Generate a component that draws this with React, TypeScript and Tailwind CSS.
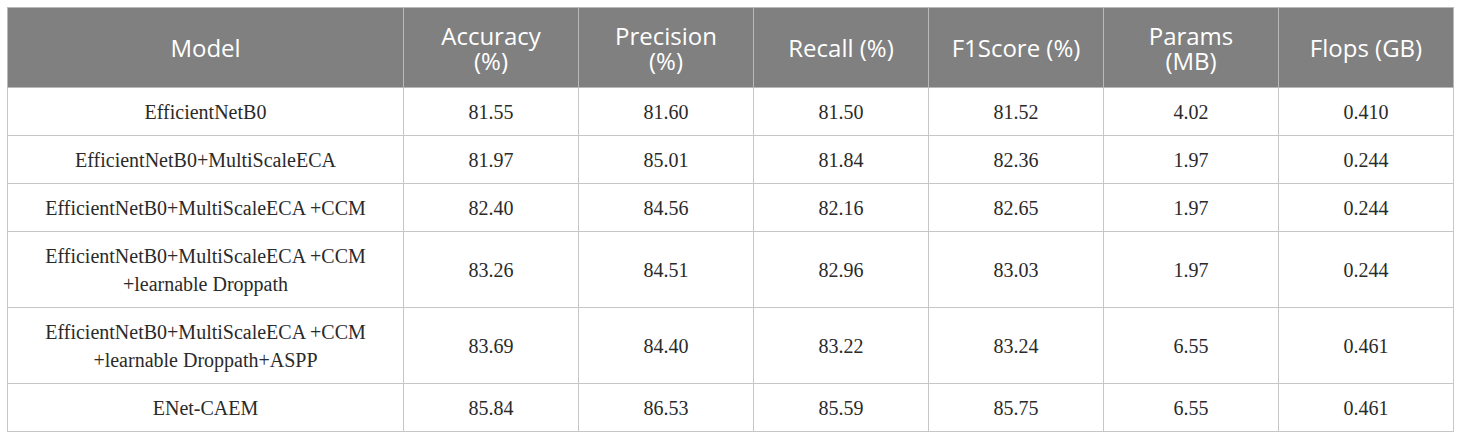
import React from 'react';

const headers = ['Model', 'Accuracy\n(%)', 'Precision\n(%)', 'Recall (%)', 'F1Score (%)', 'Params\n(MB)', 'Flops (GB)'];

const rows: string[][] = [
    ['EfficientNetB0', '81.55', '81.60', '81.50', '81.52', '4.02', '0.410'],
    ['EfficientNetB0+MultiScaleECA', '81.97', '85.01', '81.84', '82.36', '1.97', '0.244'],
    ['EfficientNetB0+MultiScaleECA +CCM', '82.40', '84.56', '82.16', '82.65', '1.97', '0.244'],
    ['EfficientNetB0+MultiScaleECA +CCM\n+learnable Droppath', '83.26', '84.51', '82.96', '83.03', '1.97', '0.244'],
    ['EfficientNetB0+MultiScaleECA +CCM\n+learnable Droppath+ASPP', '83.69', '84.40', '83.22', '83.24', '6.55', '0.461'],
    ['ENet-CAEM', '85.84', '86.53', '85.59', '85.75', '6.55', '0.461'],
];

const App: React.FC = () => {
    return (
        <div className="w-[1460px] h-[441px] bg-white pt-[7px] pl-[7px]">
            <table className="table-fixed border-collapse w-[1446px]">
                <colgroup>
                    <col className="w-[396px]" />
                    {headers.slice(1).map((h) => (
                        <col key={h} className="w-[175px]" />
                    ))}
                </colgroup>
                <thead>
                    <tr className="bg-[#7f807f]">
                        {headers.map((h) => (
                            <th
                                key={h}
                                className="h-[80px] border border-[#b9b9b9] text-white font-normal text-[24px] leading-[25px] text-center whitespace-pre-line px-2 font-['Open_Sans',sans-serif]"
                            >
                                {h}
                            </th>
                        ))}
                    </tr>
                </thead>
                <tbody>
                    {rows.map((r, i) => (
                        <tr key={i}>
                            {r.map((c, j) => (
                                <td
                                    key={j}
                                    className="border border-[#c6c6c6] text-[#2a2a2a] text-[20px] leading-[28px] text-center whitespace-pre-line pt-[10px] pb-[9px] px-2 font-['Liberation_Serif',serif]"
                                >
                                    {c}
                                </td>
                            ))}
                        </tr>
                    ))}
                </tbody>
            </table>
        </div>
    );
};

export default App;
